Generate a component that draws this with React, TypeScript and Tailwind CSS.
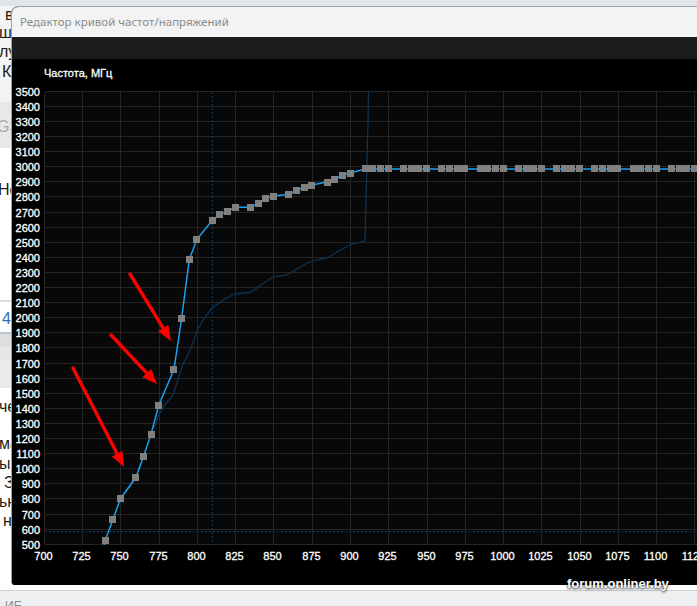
import React from "react";

type Pt = [number, number];

// chart scale, page pixels
const X0 = 43.9;
const X_STEP = 1.5305; // px per mV
const Y0 = 91.2;
const Y_STEP = 0.151; // px per MHz

const xOf = (mv: number) => X0 + (mv - 700) * X_STEP;
const yOf = (mhz: number) => Y0 + (3500 - mhz) * Y_STEP;

const GRID = "#252525";
const DOTTED = "#0b3a5c";

// V/F points up to the flat part
const curveHead: Pt[] = [
  [740, 524], [745, 661], [750, 801], [760, 940], [765, 1079], [770, 1227],
  [775, 1420], [785, 1659], [790, 1995], [795, 2387], [800, 2519], [810, 2645],
  [815, 2685], [820, 2705], [825, 2731], [835, 2731], [840, 2757], [845, 2791],
  [850, 2805], [860, 2817], [865, 2845], [870, 2865], [875, 2878], [885, 2898],
  [890, 2918], [895, 2945], [900, 2958],
];

function buildCurve(): Pt[] {
  const pts = [...curveHead];
  for (let v = 910; v <= 1125; v += 5) {
    if ((v - 730) % 25 === 0) continue;
    pts.push([v, 2985]);
  }
  return pts;
}

// monitored clock trace, already in page coords
const trace: Pt[] = [
  [154, 428], [158, 417], [163, 407], [168, 401], [173, 395], [177, 383], [182, 366],
  [187, 357], [192, 345], [197, 331], [203, 320], [212, 308], [223, 300], [235, 294],
  [250, 292.5], [257, 288], [265, 282], [273, 277], [287, 275], [297, 269], [307, 263],
  [317, 260], [327, 258], [337, 252], [350, 245], [365, 240.5], [365.5, 217],
  [366.5, 180], [368, 121], [368.5, 92],
];

const arrows: { from: Pt; to: Pt }[] = [
  { from: [130, 274], to: [171, 341] },
  { from: [111, 335], to: [157, 384] },
  { from: [73, 368], to: [124, 467] },
];

interface StripRow {
  h: number;
  bg?: string;
  text?: string;
  color?: string;
  indent?: number;
}

const stripRows: StripRow[] = [
  { h: 18, bg: "#f3f3f3", text: "в", indent: 5 },
  { h: 18, bg: "#f3f3f3", text: "ше", indent: -1 },
  { h: 20, bg: "#f3f3f3", text: "лу", indent: -1 },
  { h: 20, bg: "#f3f3f3", text: "Ка", indent: 2 },
  { h: 20, bg: "#f3f3f3" },
  { h: 4, bg: "#e8e8e8" },
  { h: 42, bg: "#e8e8e8", text: "GS", color: "#a9a9a9", indent: -3 },
  { h: 22, bg: "#ffffff" },
  { h: 40, bg: "#ffffff", text: "Не", indent: -2 },
  { h: 90, bg: "#ffffff" },
  { h: 2, bg: "#dcdcdc" },
  { h: 4, bg: "#ffffff" },
  { h: 26, bg: "#ffffff", text: "4", color: "#2f6db5", indent: 2 },
  { h: 2, bg: "#b8c4d4" },
  { h: 13, bg: "#dedede" },
  { h: 13, bg: "#e6e6e6" },
  { h: 28, bg: "#ebebeb" },
  { h: 9, bg: "#ffffff" },
  { h: 20, bg: "#ffffff", text: "че", indent: -1 },
  { h: 17, bg: "#ffffff" },
  { h: 20, bg: "#ffffff", text: "ма", indent: -1 },
  { h: 19, bg: "#ffffff", text: "ы", indent: -1 },
  { h: 19, bg: "#ffffff", text: "З", indent: 4 },
  { h: 19, bg: "#ffffff", text: "ьн", indent: -1 },
  { h: 19, bg: "#ffffff", text: "н", indent: 3 },
];

function Arrow({ from, to }: { from: Pt; to: Pt }) {
  const [x1, y1] = from;
  const [x2, y2] = to;
  const len = Math.hypot(x2 - x1, y2 - y1);
  const ux = (x2 - x1) / len;
  const uy = (y2 - y1) / len;
  const bx = x2 - ux * 15;
  const by = y2 - uy * 15;
  const nx = -uy * 6;
  const ny = ux * 6;
  return (
    <g>
      <line
        x1={x1}
        y1={y1}
        x2={x2 - ux * 9}
        y2={y2 - uy * 9}
        stroke="#ff0000"
        strokeWidth={3.4}
        strokeLinecap="round"
      />
      <polygon points={`${x2},${y2} ${bx + nx},${by + ny} ${bx - nx},${by - ny}`} fill="#ff0000" />
    </g>
  );
}

function CurveChart() {
  const pts = buildCurve();
  const flatY = yOf(2985);
  const line: Pt[] = [[104, 545], ...pts.map(([v, f]) => [xOf(v), yOf(f)] as Pt), [698, flatY]];
  const toPath = (p: Pt[]) => p.map(([x, y], i) => `${i ? "L" : "M"}${x.toFixed(1)},${y.toFixed(1)}`).join(" ");

  const vLines = Array.from({ length: 18 }, (_, k) => ({ mv: 700 + k * 25, x: Math.round(xOf(700 + k * 25)) + 0.5 }));
  const hLines = Array.from({ length: 31 }, (_, j) => ({ mhz: 3500 - j * 100, y: Math.floor(yOf(3500 - j * 100)) + 0.5 }));
  const top = hLines[0].y;
  const bottom = hLines[hLines.length - 1].y;
  const left = vLines[0].x;
  const font = "'Liberation Sans', Arial, sans-serif";

  return (
    <svg width={686} height={526} viewBox="12 59 686 526" className="block">
      <rect x={left} y={top} width={698 - left} height={bottom - top} fill="#080808" />

      <g stroke={GRID} strokeWidth={1} shapeRendering="crispEdges">
        {vLines.map((l) => (
          <line key={l.mv} x1={l.x} y1={top} x2={l.x} y2={bottom} />
        ))}
        {hLines.map((l) => (
          <line key={l.mhz} x1={left} y1={l.y} x2={698} y2={l.y} />
        ))}
      </g>

      {/* current voltage / clock markers */}
      <g stroke={DOTTED} strokeWidth={1} strokeDasharray="2 2" shapeRendering="crispEdges">
        <line x1={212.5} y1={top} x2={212.5} y2={bottom} />
        <line x1={left} y1={531.5} x2={698} y2={531.5} />
      </g>

      <path d={toPath(trace)} fill="none" stroke="#0d3352" strokeWidth={1.3} />
      <path d={toPath(line)} fill="none" stroke="#1aa1f2" strokeWidth={1.5} />

      <g fill="#808080" shapeRendering="crispEdges">
        {pts.map(([v, f]) => (
          <rect key={v} x={Math.round(xOf(v) - 3.5)} y={Math.round(yOf(f) - 3.5)} width={7} height={7} />
        ))}
      </g>

      <g fill="#ffffff" stroke="#ffffff" strokeWidth={0.3} fontFamily={font} fontSize={11}>
        <text x={44} y={77}>Частота, МГц</text>
        {hLines.map((l) => (
          <text key={l.mhz} x={40} y={l.y + 4} textAnchor="end">
            {l.mhz}
          </text>
        ))}
        {vLines.map((l) => (
          <text key={l.mv} x={l.x - 1} y={559.5} textAnchor="middle">
            {l.mv}
          </text>
        ))}
      </g>

      {arrows.map((a, i) => (
        <Arrow key={i} from={a.from} to={a.to} />
      ))}
    </svg>
  );
}

function PageStrip() {
  return (
    <div className="flex w-[11px] shrink-0 flex-col overflow-hidden">
      {stripRows.map((r, i) => (
        <div
          key={i}
          className="flex items-center whitespace-nowrap text-[16px] leading-none"
          style={{ height: r.h, background: r.bg, color: r.color ?? "#1b1b1b", paddingLeft: Math.max(r.indent ?? 0, 0), marginLeft: Math.min(r.indent ?? 0, 0) }}
        >
          {r.text}
        </div>
      ))}
      <div className="flex-1 bg-white" />
    </div>
  );
}

export default function App() {
  return (
    <div className="relative h-[606px] w-[697px] overflow-hidden bg-[#eeeff1] font-['Liberation_Sans',Arial,sans-serif]">
      <div className="h-[6px] bg-[#e1e4e8]" />

      <div className="flex h-[579px]">
        <PageStrip />

        {/* curve editor window */}
        <div className="flex w-[700px] shrink-0 flex-col overflow-hidden rounded-tl-[7px] rounded-bl-[4px] border-l border-t border-[#a3a5a8] bg-black">
          <div className="flex h-[30px] items-center bg-[#f3f3f3] pl-[8px] font-['Noto_Sans',sans-serif] text-[11.5px] text-[#8b8b8b]">
            Редактор кривой частот/напряжений
          </div>
          <div className="h-[22px] bg-[#1c1c1c]" />
          <div className="flex-1 bg-black">
            <CurveChart />
          </div>
        </div>
      </div>

      <div className="h-[5px] bg-white" />
      <div className="h-[16px] border-t border-[#d0d2d5] bg-[#eeeff1] pl-[5px] pt-[9px] text-[12px] leading-none text-[#8a8a8a]">
        ИЕ
      </div>

      <div className="absolute left-[567px] top-[576px] text-[13px] font-bold leading-[16px] text-white [text-shadow:0_1px_3px_rgba(0,0,0,0.85),0_0_2px_rgba(0,0,0,0.6)]">
        forum.onliner.by
      </div>
    </div>
  );
}
